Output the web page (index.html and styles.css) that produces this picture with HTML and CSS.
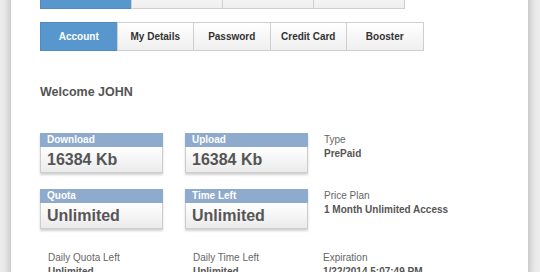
FILE: index.html
```html
<!DOCTYPE html>
<html>
<head>
<meta charset="utf-8">
<link rel="stylesheet" href="styles.css">
</head>
<body>
<div class="panel">
  <nav class="tabs tabs-main">
    <a class="tab active">My Account</a>
    <a class="tab">Top Up</a>
    <a class="tab">Support</a>
    <a class="tab">Usage</a>
  </nav>
  <nav class="tabs tabs-sub">
    <a class="tab active">Account</a>
    <a class="tab">My Details</a>
    <a class="tab">Password</a>
    <a class="tab">Credit Card</a>
    <a class="tab">Booster</a>
  </nav>
  <h2 class="welcome">Welcome JOHN</h2>
  <div class="grid">
    <div class="stat"><div class="stat-head">Download</div><div class="stat-body">16384 Kb</div></div>
    <div class="stat"><div class="stat-head">Upload</div><div class="stat-body">16384 Kb</div></div>
    <div class="info"><div class="label">Type</div><div class="value">PrePaid</div></div>

    <div class="stat"><div class="stat-head">Quota</div><div class="stat-body">Unlimited</div></div>
    <div class="stat"><div class="stat-head">Time Left</div><div class="stat-body">Unlimited</div></div>
    <div class="info"><div class="label">Price Plan</div><div class="value">1 Month Unlimited Access</div></div>

    <div class="info sub"><div class="label">Daily Quota Left</div><div class="value">Unlimited</div></div>
    <div class="info sub"><div class="label">Daily Time Left</div><div class="value">Unlimited</div></div>
    <div class="info last"><div class="label">Expiration</div><div class="value">1/22/2014 5:07:49 PM</div></div>
  </div>
</div>
</body>
</html>
```
FILE: styles.css
```css
html, body {
  margin: 0;
  padding: 0;
  height: 100%;
  overflow: hidden;
}
body {
  background: #ececec;
  font-family: "Liberation Sans", Arial, sans-serif;
  color: #555;
}
.panel {
  margin-left: 11px;
  width: 517px;
  min-height: 100%;
  background: #fff;
  box-shadow: 0 0 9px rgba(0, 0, 0, 0.28);
  padding-left: 29px;
  box-sizing: border-box;
}
.tabs {
  display: flex;
}
.tab {
  box-sizing: border-box;
  height: 29px;
  display: flex;
  align-items: center;
  justify-content: center;
  border: 1px solid #cfcfcf;
  margin-left: -1px;
  background: linear-gradient(#ffffff, #efefef);
  font-size: 10px;
  font-weight: bold;
  color: #333;
}
.tab:first-child { margin-left: 0; }
.tab.active {
  background: #5897cd;
  border-color: #4f8ac0;
  color: #fff;
}
.tabs-main {
  margin-top: -20px;
}
.tabs-main .tab {
  width: 92px;
}
.tabs-sub {
  margin-top: 13px;
}
.tabs-sub .tab {
  width: 77.5px;
}
.welcome {
  margin: 33px 0 0 0;
  font-size: 12.5px;
  line-height: 16px;
  font-weight: bold;
  color: #555;
}
.grid {
  margin-top: 33px;
  display: grid;
  grid-template-columns: 145px 139px 1fr;
  row-gap: 16px;
  align-items: start;
}
.stat {
  width: 123px;
  box-shadow: 0 2px 2px rgba(0, 0, 0, 0.18);
}
.stat-head {
  height: 14px;
  line-height: 14px;
  background: #8eaacc;
  color: #fff;
  font-size: 10px;
  font-weight: bold;
  padding-left: 7px;
}
.stat-body {
  box-sizing: border-box;
  height: 26px;
  line-height: 25px;
  border: 1px solid #cdcdcd;
  border-top: none;
  background: linear-gradient(#ffffff, #ebebeb);
  font-size: 16px;
  font-weight: bold;
  color: #555;
  padding-left: 6px;
}
.info {
  font-size: 10px;
  line-height: 14px;
}
.info .label {
  color: #666;
}
.info .value {
  font-weight: bold;
  color: #555;
}
.info.sub {
  padding-left: 8px;
  margin-top: 6px;
}
.info.last {
  margin-top: 6px;
  margin-left: -1px;
}
```
